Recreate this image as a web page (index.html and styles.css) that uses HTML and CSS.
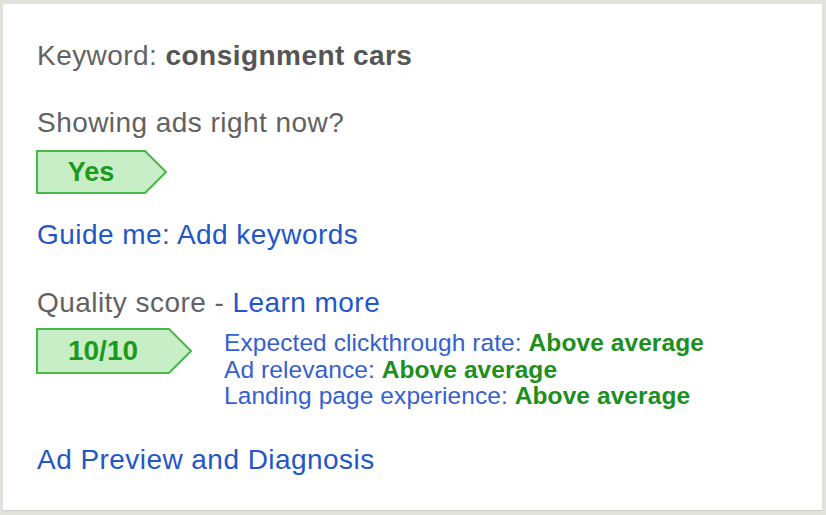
FILE: index.html
```html
<!DOCTYPE html>
<html>
<head>
<meta charset="utf-8">
<link rel="stylesheet" href="styles.css">
</head>
<body>
<div class="panel">
  <div class="line keyword">Keyword: <b>consignment cars</b></div>
  <div class="line showing">Showing ads right now?</div>
  <div class="badge badge-yes">
    <svg class="badge-shape" width="131" height="44" viewBox="0 0 131 44"><polygon points="1,1 109,1 130,22 109,43 1,43" fill="#c8eec8" stroke="#48b848" stroke-width="2"/></svg>
    <span class="badge-text">Yes</span>
  </div>
  <a class="line link guide">Guide me: Add keywords</a>
  <div class="line quality">Quality score - <a class="link">Learn more</a></div>
  <div class="score-row">
    <div class="badge badge-score">
      <svg class="badge-shape" width="156" height="46" viewBox="0 0 156 46"><polygon points="1,1 133,1 155,23 133,45 1,45" fill="#c8eec8" stroke="#48b848" stroke-width="2"/></svg>
      <span class="badge-text">10/10</span>
    </div>
    <div class="details">
      <div>Expected clickthrough rate: <b>Above average</b></div>
      <div>Ad relevance: <b>Above average</b></div>
      <div>Landing page experience: <b>Above average</b></div>
    </div>
  </div>
  <a class="line link preview">Ad Preview and Diagnosis</a>
</div>
</body>
</html>
```
FILE: styles.css
```css
html, body {
  margin: 0;
  padding: 0;
}
body {
  background: #e2e2dc;
  width: 826px;
  height: 515px;
  overflow: hidden;
  font-family: "Liberation Sans", Arial, sans-serif;
  padding: 4px 4px 0 3px;
  box-sizing: border-box;
}
.panel {
  background: #ffffff;
  height: 506px;
  box-sizing: border-box;
  padding: 36px 20px 0 34px;
  display: flex;
  flex-direction: column;
  align-items: flex-start;
  box-shadow: 0 1px 1px rgba(0,0,0,0.08);
}
.line {
  font-size: 28px;
  line-height: 32px;
  letter-spacing: 0.45px;
  color: #626262;
  display: block;
}
.keyword b {
  color: #555555;
}
.showing {
  margin-top: 35px;
}
.link {
  color: #2456c8;
  text-decoration: none;
}
.badge {
  position: relative;
  display: flex;
  align-items: center;
  margin-left: -1px;
}
.badge-shape {
  position: absolute;
  left: 0;
  top: 0;
  display: block;
}
.badge-text {
  position: relative;
  font-size: 27px;
  font-weight: bold;
  color: #1c9a1c;
  text-align: center;
}
.badge-yes {
  width: 131px;
  height: 44px;
  margin-top: 11px;
}
.badge-yes .badge-text {
  width: 110px;
}
.guide {
  margin-top: 25px;
}
.quality {
  margin-top: 36px;
}
.score-row {
  display: flex;
  align-items: flex-start;
  gap: 32px;
  margin-top: 9px;
}
.badge-score {
  width: 156px;
  height: 46px;
}
.badge-score .badge-text {
  width: 134px;
  font-size: 28px;
}
.details {
  margin-top: 2px;
  font-size: 24.5px;
  line-height: 26.5px;
  letter-spacing: 0.08px;
  color: #3560cf;
}
.details b {
  color: #1d8f1d;
}
.preview {
  margin-top: 34px;
}
```
